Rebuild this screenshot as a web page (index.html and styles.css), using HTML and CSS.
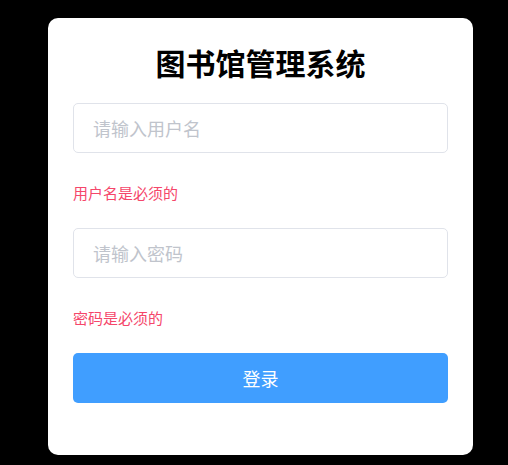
FILE: index.html
```html
<!DOCTYPE html>
<html lang="zh-CN">
<head>
    <meta charset="UTF-8">
    <meta name="viewport" content="width=device-width, initial-scale=1.0">
    <title>图书馆管理系统</title>
    <link rel="stylesheet" href="styles.css">
</head>
<body>
    <div class="login-card">
        <h1 class="title">图书馆管理系统</h1>
        <form class="login-form">
            <div class="form-item">
                <input class="form-input" type="text" placeholder="请输入用户名">
                <div class="form-error">用户名是必须的</div>
            </div>
            <div class="form-item">
                <input class="form-input" type="password" placeholder="请输入密码">
                <div class="form-error">密码是必须的</div>
            </div>
            <button class="btn-login" type="button">登录</button>
        </form>
    </div>
</body>
</html>
```

FILE: styles.css
```css
body {
    margin: 0;
    background: #000;
    font-family: "Noto Sans CJK SC", "Noto Sans", sans-serif;
    padding-top: 18px;
    padding-left: 48px;
}
.login-card {
    width: 425px;
    box-sizing: border-box;
    background: #fff;
    border-radius: 10px;
    padding: 24px 25px 52px;
}
.title {
    margin: 0 0 21px;
    font-size: 30px;
    line-height: 40px;
    font-weight: bold;
    text-align: center;
    color: #000;
}
.login-form {
    display: flex;
    flex-direction: column;
}
.form-item {
    margin-bottom: 25px;
}
.form-input {
    display: block;
    width: 100%;
    height: 50px;
    box-sizing: border-box;
    border: 1px solid #e0e3ea;
    border-radius: 5px;
    padding: 0 19px;
    font-family: inherit;
    font-size: 18px;
    color: #606266;
    outline: none;
}
.form-input::placeholder {
    color: #c0c4cc;
}
.form-error {
    margin-top: 30px;
    font-size: 15px;
    line-height: 20px;
    color: #f5466a;
}
.btn-login {
    height: 50px;
    border: none;
    border-radius: 5px;
    background: #409eff;
    color: #fff;
    font-family: inherit;
    font-size: 18px;
    cursor: pointer;
}
```
